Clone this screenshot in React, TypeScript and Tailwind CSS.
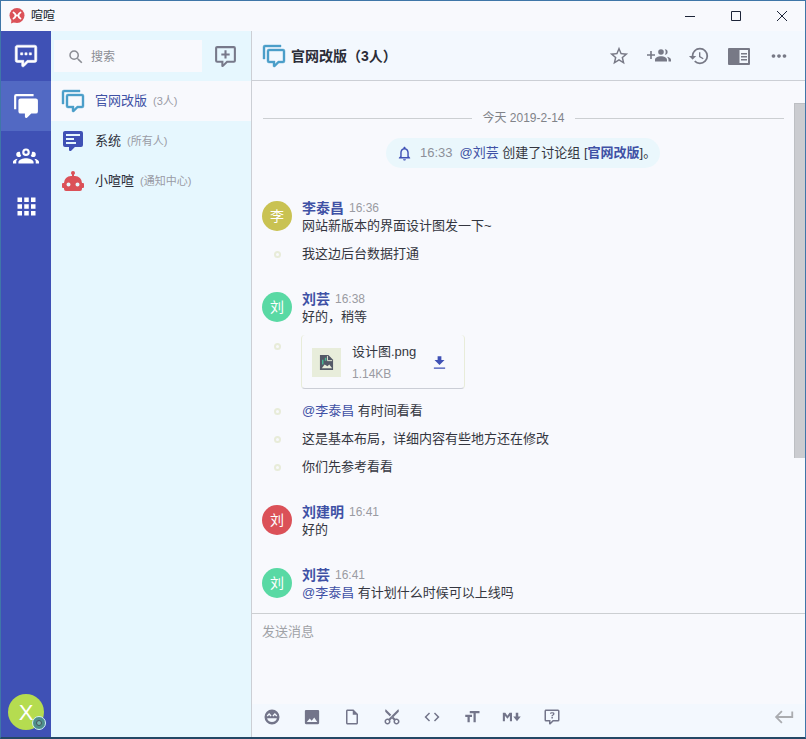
import type { ReactNode } from "react";
import {
  MdApps,
  MdCode,
  MdContentCut,
  MdFormatSize,
  MdHistory,
  MdMoreHoriz,
  MdNotificationsNone,
  MdOutlineInsertDriveFile,
  MdSearch,
  MdStarBorder,
} from "react-icons/md";

const BUBBLE =
  "M9,22A1,1 0 0,1 8,21V18H4A2,2 0 0,1 2,16V4C2,2.89 2.9,2 4,2H20A2,2 0 0,1 22,4V16A2,2 0 0,1 20,18H13.9L10.2,21.71C10,21.9 9.75,22 9.5,22H9";

const icons = {
  chat: BUBBLE + "M10,16V19.08L13.08,16H20V4H4V16H10M17,11H15V9H17V11M13,11H11V9H13V11M9,11H7V9H9V11Z",
  chatPlus: BUBBLE + "M10,16V19.08L13.08,16H20V4H4V16H10M11,6H13V9H16V11H13V14H11V11H8V9H11V6Z",
  chatText: BUBBLE + "M5,5V7H19V5H5M5,9V11H13V9H5M5,13V15H15V13H5Z",
  chatHelp:
    BUBBLE +
    "M10,16V19.08L13.08,16H20V4H4V16H10M12.2,5.5C11.3,5.5 10.6,5.7 10.1,6C9.5,6.4 9.2,7 9.3,7.7H11.2C11.2,7.4 11.3,7.2 11.5,7.1C11.7,7 11.9,6.9 12.2,6.9C12.5,6.9 12.8,7 13,7.2C13.2,7.4 13.3,7.6 13.3,7.9C13.3,8.2 13.2,8.4 13.1,8.6C12.9,8.8 12.7,9 12.5,9.1C12,9.4 11.7,9.7 11.5,9.9C11.3,10.1 11.2,10.5 11.2,11H13.2C13.2,10.7 13.3,10.5 13.3,10.3C13.4,10.1 13.6,10 13.8,9.8C14.2,9.6 14.6,9.3 14.9,8.9C15.2,8.5 15.3,8.1 15.3,7.7C15.3,7 15,6.4 14.5,6C13.9,5.7 13.1,5.5 12.2,5.5M11.2,12V14H13.2V12H11.2Z",
  groupOutline:
    "M12,23A1,1 0 0,1 11,22V19H7A2,2 0 0,1 5,17V7A2,2 0 0,1 7,5H21A2,2 0 0,1 23,7V17A2,2 0 0,1 21,19H16.9L13.2,22.71C13,22.9 12.75,23 12.5,23H12M13,17V20.08L16.08,17H21V7H7V17H13M3,15H1V3A2,2 0 0,1 3,1H19V3H3V15Z",
  group:
    "M12,23A1,1 0 0,1 11,22V19H7A2,2 0 0,1 5,17V7A2,2 0 0,1 7,5H21A2,2 0 0,1 23,7V17A2,2 0 0,1 21,19H16.9L13.2,22.71C13,22.9 12.75,23 12.5,23H12M3,15H1V3A2,2 0 0,1 3,1H19V3H3V15Z",
  people:
    "M12,5A3.5,3.5 0 0,0 8.5,8.5A3.5,3.5 0 0,0 12,12A3.5,3.5 0 0,0 15.5,8.5A3.5,3.5 0 0,0 12,5M12,7A1.5,1.5 0 0,1 13.5,8.5A1.5,1.5 0 0,1 12,10A1.5,1.5 0 0,1 10.5,8.5A1.5,1.5 0 0,1 12,7M5.5,8A2.5,2.5 0 0,0 3,10.5C3,11.44 3.53,12.25 4.29,12.68C4.65,12.88 5.06,13 5.5,13C5.94,13 6.35,12.88 6.71,12.68C7.08,12.47 7.39,12.17 7.62,11.81C6.89,10.86 6.5,9.7 6.5,8.5C6.5,8.41 6.5,8.31 6.5,8.22C6.2,8.08 5.86,8 5.5,8M18.5,8C18.14,8 17.8,8.08 17.5,8.22C17.5,8.31 17.5,8.41 17.5,8.5C17.5,9.7 17.11,10.86 16.38,11.81C16.82,12.54 17.61,13 18.5,13A2.5,2.5 0 0,0 21,10.5A2.5,2.5 0 0,0 18.5,8M12,14C9.66,14 5,15.17 5,17.5V19H19V17.5C19,15.17 14.34,14 12,14M4.71,14.55C2.78,14.78 0,15.76 0,17.5V19H3V17.07C3,16.06 3.69,15.22 4.71,14.55M19.29,14.55C20.31,15.22 21,16.06 21,17.07V19H24V17.5C24,15.76 21.22,14.78 19.29,14.55Z",
  robot:
    "M12,2A2,2 0 0,1 14,4C14,4.74 13.6,5.39 13,5.73V7H14A7,7 0 0,1 21,14H22A1,1 0 0,1 23,15V18A1,1 0 0,1 22,19H21V20A2,2 0 0,1 19,22H5A2,2 0 0,1 3,20V19H2A1,1 0 0,1 1,18V15A1,1 0 0,1 2,14H3A7,7 0 0,1 10,7H11V5.73C10.4,5.39 10,4.74 10,4A2,2 0 0,1 12,2M7.5,13.5A2,2 0 0,0 5.500,15.500A2,2 0 0,0 7.500,17.500A2,2 0 0,0 9.500,15.500A2,2 0 0,0 7.500,13.500M16.500,13.500A2,2 0 0,0 14.500,15.500A2,2 0 0,0 16.500,17.500A2,2 0 0,0 18.500,15.500A2,2 0 0,0 16.500,13.500Z",
  sidebar: "M2,4H22A1,1 0 0,1 23,5V20A1,1 0 0,1 22,21H2A1,1 0 0,1 1,20V5A1,1 0 0,1 2,4M12.5,6V19H21V6H12.5M14,9H20V10.5H14V9M14,12H20V13.5H14V12M14,15H20V16.5H14V15Z",
  smile:
    "M12,2A10,10 0 1,0 22,12A10,10 0 0,0 12,2M5,10L8.200,6.500L11.400,10L10.200,11.200L8.200,9.200L6.200,11.200L5,10M12.600,10L15.800,6.500L19,10L17.800,11.200L15.800,9.200L13.800,11.200L12.600,10M5.500,13.500H18.500A6.700,6.700 0 0,1 5.500,13.500Z",
  image: "M4,2.500H20A1.500,1.500 0 0,1 21.500,4V20A1.500,1.500 0 0,1 20,21.500H4A1.500,1.500 0 0,1 2.500,20V4A1.500,1.500 0 0,1 4,2.500M5,18.500H19L15,12.500L11.500,17L9,14L5,18.500Z",
  markdown: "M1,17V7H4L6.500,10.500L9,7H12V17H9.500V10.500L6.500,14L3.500,10.500V17H1M16.500,7H19.500V11.500H22.500L18,17L13.500,11.500H16.500V7Z",
  download: "M9,2H15V8H20L12,16L4,8H9V2M3,20H21V22H3V20Z",
  enter: "M22,6V13H5.8L10.4,17.6L9,19L2,12L9,5L10.4,6.4L5.8,11H20V6H22Z",
};

function Icon({ name, className }: { name: keyof typeof icons; className?: string }) {
  return (
    <svg viewBox="0 0 24 24" fill="currentColor" fillRule="evenodd" className={`shrink-0 ${className ?? ""}`}>
      <path d={icons[name]} />
    </svg>
  );
}

function Logo() {
  return (
    <svg viewBox="0 0 16 16" className="size-4">
      <circle cx="8" cy="7.500" r="7.500" fill="#db5158" />
      <path d="M2.500 12l-.5 3.500L6 14z" fill="#db5158" />
      <path d="M4.500 4.500Q6.500 5.500 6.500 7.500T4.500 10.500M11.500 4.500Q9.500 5.500 9.500 7.500T11.500 10.500M6.500 7.500h3" fill="none" stroke="#fff" strokeWidth="1.800" strokeLinecap="round" />
    </svg>
  );
}

function TitleBar() {
  return (
    <div className="flex h-[30px] shrink-0 items-center bg-[#f8f9fd] pl-2 text-xs text-[#111827]">
      <Logo />
      <span className="ml-1.5 flex-1">喧喧</span>
      <div className="mr-[17px] flex items-center gap-[34px] text-[#1c2438]">
        <svg viewBox="0 0 12 12" className="size-3" stroke="currentColor"><path d="M1 6.500h10" /></svg>
        <svg viewBox="0 0 12 12" className="size-3" stroke="currentColor" fill="none"><path d="M1.500 1.500h9v9h-9z" /></svg>
        <svg viewBox="0 0 12 12" className="size-3" stroke="currentColor"><path d="M1 1l10 10M11 1L1 11" /></svg>
      </div>
    </div>
  );
}

function Nav() {
  return (
    <nav className="flex w-[50px] shrink-0 flex-col items-center bg-[#3f51b5] text-white">
      <div className="flex h-[50px] w-full items-center justify-center"><Icon name="chat" className="size-[26px] stroke-current stroke-[0.5]" /></div>
      <div className="flex h-[50px] w-full items-center justify-center bg-[#5269c3]"><Icon name="group" className="size-[26px]" /></div>
      <div className="flex h-[50px] w-full items-center justify-center"><Icon name="people" className="size-[26px]" /></div>
      <div className="flex h-[50px] w-full items-center justify-center pt-px"><MdApps className="size-[27px]" /></div>
      <div className="relative mt-auto mb-[7px] flex size-9 items-center justify-center rounded-full bg-[#b5dc50] text-[22px]">
        X
        <span className="absolute -right-0.5 bottom-0 flex size-[14px] items-center justify-center rounded-full border border-[#d5f2f5] bg-[#4d8f8b]">
          <span className="size-1.5 rounded-full border border-[#48525c] bg-[#72b5a8]" />
        </span>
      </div>
    </nav>
  );
}

function ChatRow({ icon, name, note, active }: { icon: ReactNode; name: string; note: string; active?: boolean }) {
  return (
    <div className={`flex h-10 items-center pl-[10px] ${active ? "bg-[#f8f9fd] text-[#3f51a5]" : "text-[#2b2d38]"}`}>
      {icon}
      <span className="ml-[10px] text-[13px]">{name}</span>
      <span className="ml-1.5 text-[11px] text-[#9a9ba5]">{note}</span>
    </div>
  );
}

function Sidebar() {
  return (
    <aside className="w-[201px] shrink-0 border-r border-[#cccfd5] bg-[#e6f7fe]">
      <div className="flex h-[50px] items-center">
        <div className="ml-[3px] flex h-[32px] w-[148px] items-center bg-[#f8f9fd] pt-px pl-[13px] text-[#8b8d94]">
          <MdSearch className="size-[18px]" />
          <span className="ml-[6px] text-xs">搜索</span>
        </div>
        <Icon name="chatPlus" className="ml-[11px] size-[25px] text-[#77798a]" />
      </div>
      <ChatRow active name="官网改版" note="(3人)" icon={<Icon name="groupOutline" className="size-6 stroke-current stroke-[0.4] text-[#4b9fc9]" />} />
      <ChatRow name="系统" note="(所有人)" icon={<Icon name="chatText" className="size-6 text-[#3f51b5]" />} />
      <ChatRow name="小喧喧" note="(通知中心)" icon={<Icon name="robot" className="size-6 text-[#db5158]" />} />
    </aside>
  );
}

function ChatHeader() {
  return (
    <header className="flex h-[50px] shrink-0 items-center border-b border-[#cccfd5] bg-[#f3f8fe] pr-[15px] pl-[10px]">
      <Icon name="groupOutline" className="size-6 stroke-current stroke-[0.4] text-[#4b9fc9]" />
      <h1 className="ml-[5px] flex-1 text-sm font-bold text-[#2b2d38]">官网改版（3人）</h1>
      <div className="flex items-center gap-[18px] text-[#777986]">
        <MdStarBorder className="size-[22px]" />
        <svg viewBox="0 0 26 22" className="-mx-0.5 h-[22px] w-[26px]" fill="currentColor">
          <path d="M1 9.200h3.200V6h1.600v3.200H9v1.600H5.800V14H4.200v-3.200H1z" />
          <circle cx="15" cy="7" r="2.800" />
          <path d="M18.800 4.200a2.800 2.800 0 0 1 0 5.600 5 5 0 0 0 0-5.600zM9 16.500v-1.500c0-2.500 3-3.700 6-3.700s6 1.200 6 3.700v1.500zM21 11.800c2.500.5 4 1.500 4 3.200v1.500h-2.500v-1.500c0-1.300-.6-2.300-1.500-3.200z" />
        </svg>
        <MdHistory className="size-[22px]" />
        <Icon name="sidebar" className="-mx-px size-6" />
        <MdMoreHoriz className="size-[22px]" />
      </div>
    </header>
  );
}

const AVATAR_COLORS = { olive: "bg-[#c9c252]", green: "bg-[#59d9a4]", red: "bg-[#db5158]" };

function Message({ name, time, color, children }: { name: string; time: string; color: keyof typeof AVATAR_COLORS; children: ReactNode }) {
  return (
    <div className="flex">
      <div className={`flex size-[30px] shrink-0 items-center justify-center rounded-full text-sm text-white ${AVATAR_COLORS[color]}`}>{name[0]}</div>
      <div className="-mt-0.5 ml-[10px] leading-[18px]">
        <div className="flex items-center gap-[5px]">
          <b className="text-sm leading-[18px] text-[#3f51a5]">{name}</b>
          <span className="text-xs leading-[18px] text-[#9a9ba2]">{time}</span>
        </div>
        <div className="text-[13px]">{children}</div>
      </div>
    </div>
  );
}

function Reply({ children }: { children: ReactNode }) {
  return (
    <div className="flex h-7 items-center">
      <span className="mr-[21px] ml-3 size-[7px] rounded-full border-2 border-[#e8ecd9]" />
      <span className="text-[13px]">{children}</span>
    </div>
  );
}

function Mention({ children }: { children: ReactNode }) {
  return <span className="text-[#3f51a5]">{children}</span>;
}

function FileCard() {
  return (
    <div className="flex">
      <span className="mt-[8px] mr-[20px] ml-3 size-[7px] shrink-0 rounded-full border-2 border-[#e8ecd9]" />
      <div className="flex h-[54px] w-[164px] items-center rounded-sm border-x border-b border-x-[#e8ecd9] border-b-[#cbced6] pt-0.5 pl-[10px]">
        <div className="flex size-[29px] items-center justify-center bg-[#e8eddb]">
          <svg viewBox="0 0 16 18" className="h-[17px] w-[15px]">
            <path d="M1 1h9l5 5v11H1z" fill="#545967" />
            <path d="M9 2v5h5" fill="none" stroke="#e8eddb" />
            <path d="M3 15l3-4 3 2 2-2 3 4z" fill="#e8eddb" />
            <path d="M4 6v5M7 4v3" stroke="#46b995" strokeWidth="1.500" />
          </svg>
        </div>
        <div className="ml-[11px] w-[80px]">
          <div className="text-[13px] leading-[23px]">设计图.png</div>
          <div className="text-xs leading-[23px] text-[#9a9ba2]">1.14KB</div>
        </div>
        <Icon name="download" className="size-[15px] text-[#3f51b5]" />
      </div>
    </div>
  );
}

function Conversation() {
  return (
    <section className="flex min-h-0 flex-1 bg-[#f8f9fd] text-[#343640]">
      <div className="flex w-[541px] shrink-0 flex-col pt-7 pl-[10px]">
        <div className="flex h-[18px] items-center gap-[10px] pr-[9px] pl-px text-xs text-[#818389]">
          <i className="h-px flex-1 bg-[#cccfd2]" />
          <span>今天 2019-2-14</span>
          <i className="h-px flex-1 bg-[#cccfd2]" />
        </div>
        <div className="mt-[11px] ml-[124px] flex h-[30px] w-[274px] items-center rounded-full bg-[#eaf7fc] pl-[10px] text-[13px] whitespace-pre">
          <MdNotificationsNone className="size-[17px] text-[#3f51b5]" />
          <span className="ml-[7px] text-[#8d9099]">16:33</span>
          <span className="ml-[7px]"><Mention>@刘芸</Mention> 创建了讨论组 [<b className="text-[#3f51a5]">官网改版</b>]。</span>
        </div>
        <div className="mt-[33px]">
          <Message name="李泰昌" time="16:36" color="olive">网站新版本的界面设计图发一下~</Message>
        </div>
        <div className="mt-[5px]"><Reply>我这边后台数据打通</Reply></div>
        <div className="mt-6">
          <Message name="刘芸" time="16:38" color="green">好的，稍等</Message>
        </div>
        <div className="mt-[9px]"><FileCard /></div>
        <div className="mt-2">
          <Reply><Mention>@李泰昌</Mention> 有时间看看</Reply>
          <Reply>这是基本布局，详细内容有些地方还在修改</Reply>
          <Reply>你们先参考看看</Reply>
        </div>
        <div className="mt-6">
          <Message name="刘建明" time="16:41" color="red">好的</Message>
        </div>
        <div className="mt-[29px]">
          <Message name="刘芸" time="16:41" color="green"><Mention>@李泰昌</Mention> 有计划什么时候可以上线吗</Message>
        </div>
      </div>
      <div className="mt-[22px] ml-px h-[355px] flex-1 border-t border-l border-[#bdbfc3] bg-[#cbccd0]" />
    </section>
  );
}

function Composer() {
  return (
    <footer className="flex h-[124px] shrink-0 flex-col border-t border-[#cccfd2] bg-[#f8f9fd]">
      <div className="flex-1 pt-[9px] pl-[10px] text-[13px] leading-[18px] text-[#a0a2a7]">发送消息</div>
      <div className="flex h-[33px] items-center bg-[#f3f8fe] pr-2.5 pb-2 pl-[11px] text-[#73758a]">
        <div className="flex flex-1 items-center gap-[22px]">
          <Icon name="smile" className="size-[18px]" />
          <Icon name="image" className="size-[18px]" />
          <MdOutlineInsertDriveFile className="size-[18px]" />
          <MdContentCut className="size-[18px] -rotate-90" />
          <MdCode className="size-[18px]" />
          <MdFormatSize className="size-[18px]" />
          <Icon name="markdown" className="-mx-px size-5" />
          <Icon name="chatHelp" className="size-[18px]" />
        </div>
        <Icon name="enter" className="size-[22px] text-[#aaacb0]" />
      </div>
    </footer>
  );
}

export default function App() {
  return (
    <div className="flex h-[739px] w-[806px] flex-col overflow-hidden border border-b-2 border-[#3f76a8] border-b-[#244866] bg-[#f8f9fd] font-['Liberation_Sans','Noto_Sans_CJK_SC',sans-serif]">
      <TitleBar />
      <div className="flex min-h-0 flex-1">
        <Nav />
        <Sidebar />
        <main className="flex min-w-0 flex-1 flex-col">
          <ChatHeader />
          <Conversation />
          <Composer />
        </main>
      </div>
    </div>
  );
}
